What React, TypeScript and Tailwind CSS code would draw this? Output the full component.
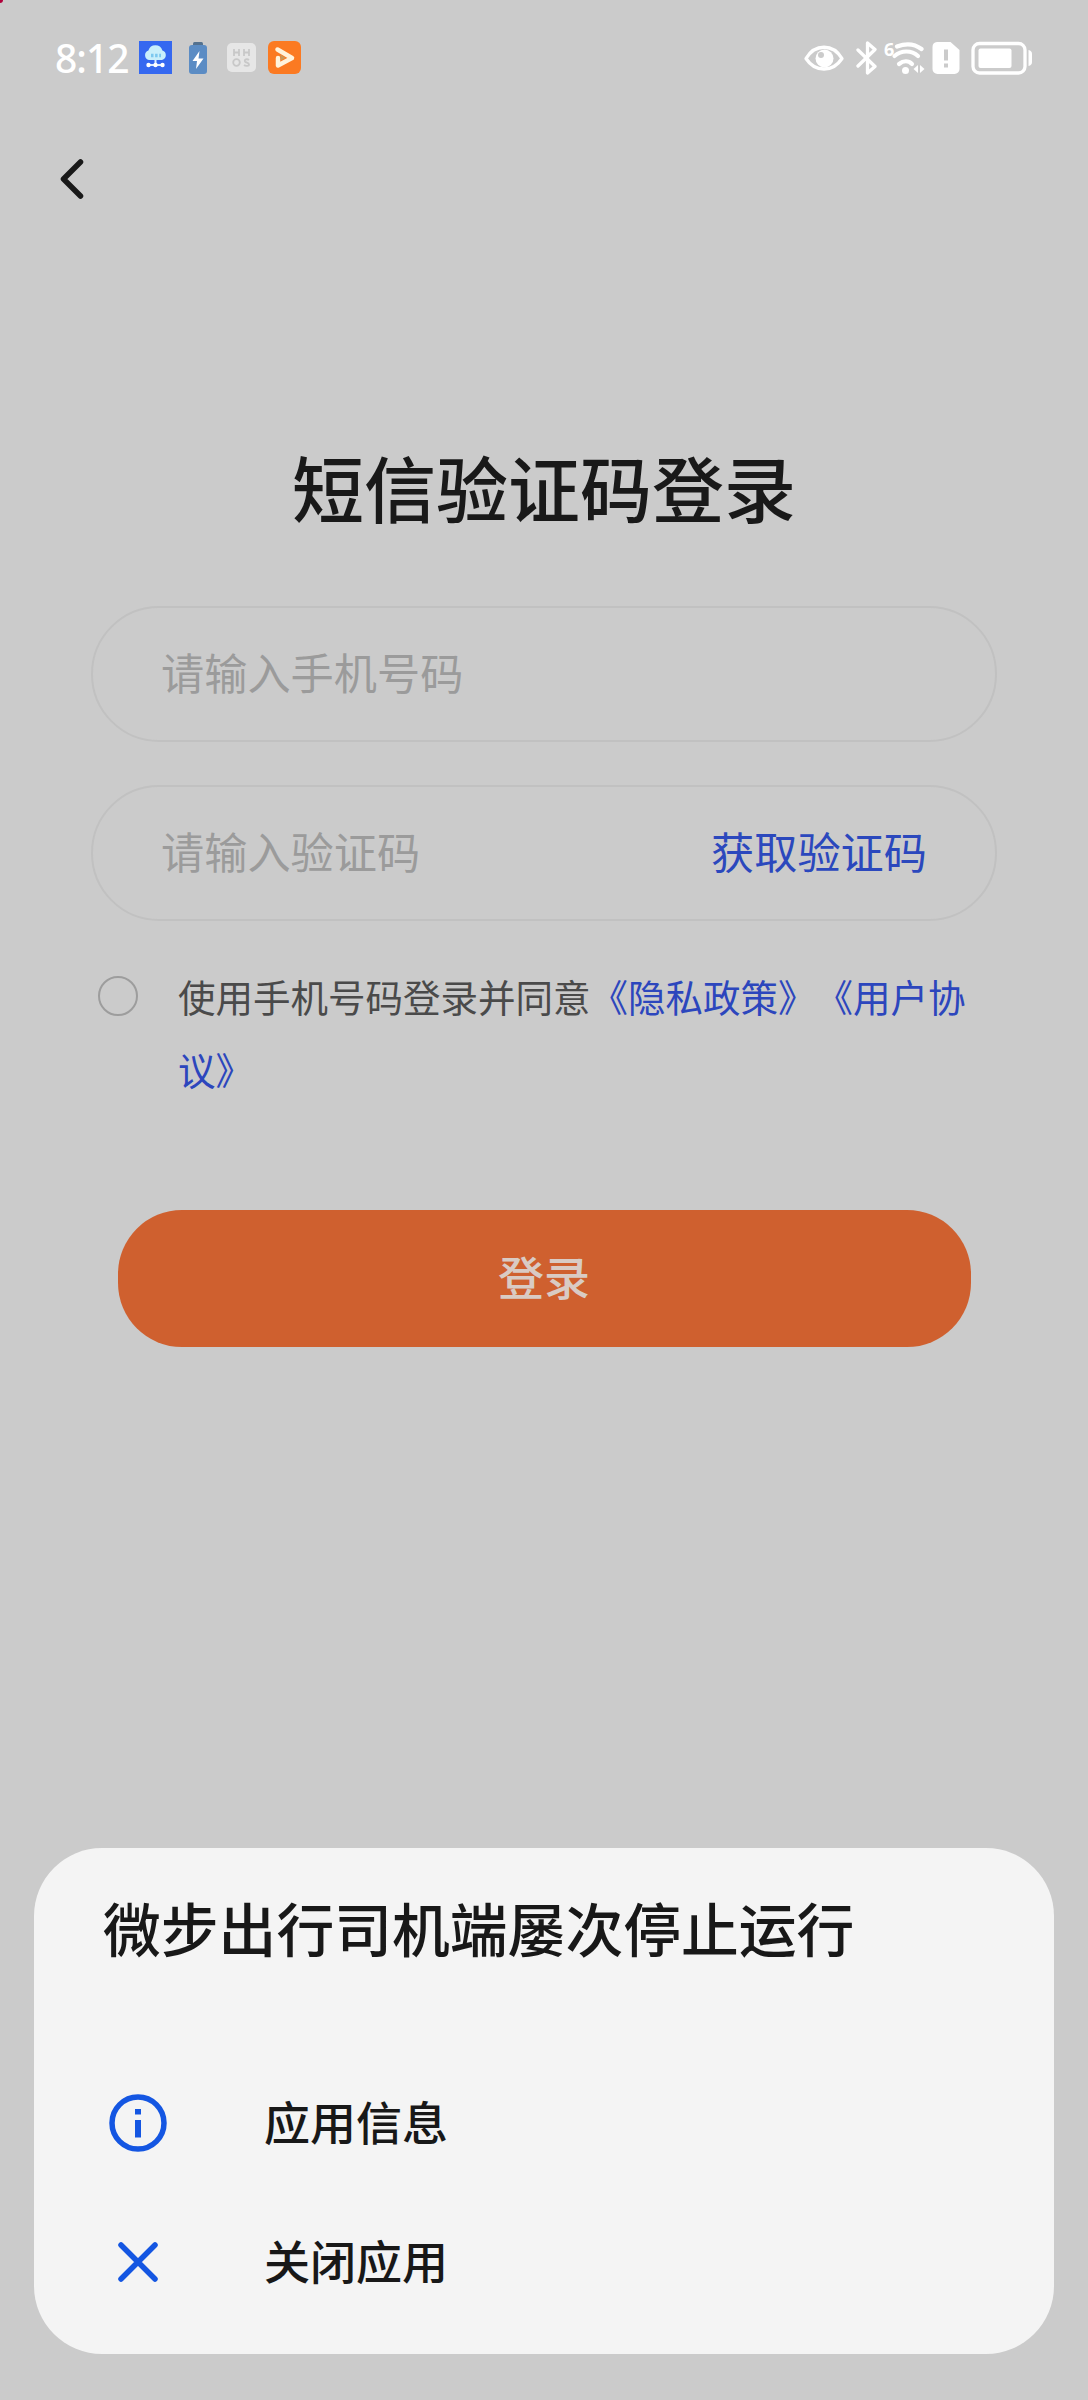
import React from 'react';

function NotificationIcons() {
  return (
    <div className="flex items-center">
      <svg className="w-[33px] h-[33px]" viewBox="0 0 33 33">
        <rect width="33" height="33" fill="#3568f0" />
        <path d="M10 19a5 5 0 0 1-.6-9.6 7.300 7.300 0 0 1 14 0A5 5 0 0 1 23 19z" fill="#c9effb" />
        <path d="M12 14.500h10" stroke="#7cc8ef" strokeWidth="3.500" strokeDasharray="2.500 1.600" />
        <path d="M16.500 19v5M8 24h17" stroke="#d9ecff" strokeWidth="2" />
        <circle cx="9.500" cy="24" r="2.200" fill="#fff" />
        <circle cx="16.500" cy="24" r="2.200" fill="#fff" />
        <circle cx="23.500" cy="24" r="2.200" fill="#fff" />
      </svg>
      <svg className="w-[18px] h-[32px] ml-[17px]" viewBox="0 0 18 32">
        <rect x="4" y="0" width="10" height="4" rx="1.500" fill="#53718f" />
        <rect x="0" y="3" width="18" height="29" rx="3" fill="#5b8cc4" />
        <path d="M10.500 9 3.500 19h4.500L7 27 14.500 16.500H9.500z" fill="#fff" />
      </svg>
      <svg className="w-[29px] h-[29px] ml-[20px]" viewBox="0 0 29 29">
        <rect width="29" height="29" rx="5" fill="#e6e6e6" />
        <g fill="none" stroke="#c8c8c8" strokeWidth="1.800">
          <path d="M7 6v7M12 6v7M7 9.500h5M17 6v7M22 6v7M17 9.500h5" />
          <circle cx="9.500" cy="19.500" r="3.300" />
          <path d="M22 17c-2-1.500-5-.5-4 1.500.8 1.500 4 1 4 3 0 1.800-3.500 1.800-5 .5" />
        </g>
      </svg>
      <svg className="w-[33px] h-[33px] ml-[12px]" viewBox="0 0 33 33">
        <rect width="33" height="33" rx="6" fill="#fb7a22" />
        <path d="M9.500 8.500L24 17 10 24.500V17" fill="none" stroke="#fff3dc" strokeWidth="4.500" strokeLinejoin="round" strokeLinecap="round" />
        <path d="M12.500 13.500v6l5-2.500z" fill="#c79a5c" />
      </svg>
    </div>
  );
}

function SystemIcons() {
  return (
    <div className="flex items-center">
      <svg className="w-[40px] h-[34px]" viewBox="0 0 40 34" fill="none">
        <path d="M2 17.500C11 2.500 29 2.500 38 17.500 29 31.500 11 31.500 2 17.500z" stroke="#fff" strokeWidth="3.300" strokeLinejoin="round" />
        <circle cx="20.500" cy="17.500" r="9" fill="#fff" />
        <circle cx="17" cy="14" r="3" fill="#cbcbcb" />
      </svg>
      <svg className="w-[22px] h-[34px] ml-[12px]" viewBox="0 0 22 34" fill="none">
        <path d="M2 9l17 16.500-7.500 6.500V2L19 8.500 2 25" stroke="#fff" strokeWidth="3.300" strokeLinejoin="round" strokeLinecap="round" />
      </svg>
      <div className="relative ml-[6px] w-[42px] h-[34px]">
        <span className="absolute left-0 top-0 font-['Noto_Sans'] text-[18px] leading-[16px] font-bold text-white">6</span>
        <svg className="w-[42px] h-[34px]" viewBox="0 0 42 34" fill="none">
          <g stroke="#fff" strokeWidth="4.200" strokeLinecap="round">
            <path d="M13 5.500c9-3.500 18-2.500 24.500 2.500" />
            <path d="M10.500 15c7-6 17-6 23.500 0" />
            <path d="M15 23c4.500-3.500 9.500-3.500 13 0" />
          </g>
          <circle cx="21.500" cy="29.500" r="3.500" fill="#fff" />
          <path d="M34 24v8l-4.500-4zM36 24v8l4.500-4z" fill="#fff" />
        </svg>
      </div>
      <svg className="w-[28px] h-[34px] ml-[6px]" viewBox="0 0 28 34">
        <path d="M5 1h13.500L27.500 9v19a5 5 0 0 1-5 5H5.500a5 5 0 0 1-5-5V6a5 5 0 0 1 4.500-5z" fill="#fff" />
        <path d="M14 8.500v11M14 22.500v4" stroke="#cbcbcb" strokeWidth="4" />
      </svg>
      <svg className="w-[62px] h-[34px] ml-[11px]" viewBox="0 0 62 34">
        <rect x="2" y="2.500" width="52" height="29.500" rx="6.500" fill="none" stroke="#fff" strokeWidth="3.300" />
        <rect x="7.500" y="7.500" width="33" height="19.500" rx="2" fill="#fff" />
        <path d="M57.500 9c2.500.5 3.500 2 3.500 4v8c0 2-1 3.500-3.500 4z" fill="#fff" />
      </svg>
    </div>
  );
}

function StatusBar() {
  return (
    <header className="flex items-center justify-between h-[115px] pl-[55px] pr-[55px]">
      <div className="flex items-center">
        <span className="w-[84px] font-['Noto_Sans'] text-[39px] leading-none font-medium tracking-[-1px] text-white">8:12</span>
        <NotificationIcons />
      </div>
      <SystemIcons />
    </header>
  );
}

function LoginForm() {
  return (
    <main className="flex flex-col items-center">
      <h1 className="text-[72px] leading-[104px] font-medium text-[#191919]">短信验证码登录</h1>
      <div className="mt-[68px] flex items-center w-[906px] h-[136px] px-[68px] pb-[6px] rounded-[68px] border-2 border-[#c1c1c1]">
        <span className="text-[43.200px] text-[#9b9b9b]">请输入手机号码</span>
      </div>
      <div className="mt-[43px] flex items-center justify-between w-[906px] h-[136px] px-[68px] pb-[6px] rounded-[68px] border-2 border-[#c1c1c1]">
        <span className="text-[43.200px] text-[#9b9b9b]">请输入验证码</span>
        <button className="text-[43.200px] text-[#2b48bd]">获取验证码</button>
      </div>
      <div className="mt-[38px] flex w-[892px]">
        <span className="mt-[17px] w-[40px] h-[40px] shrink-0 rounded-full border-2 border-[#9d9d9d]" />
        <p className="ml-[40px] w-[800px] text-[37.500px] leading-[73px] text-[#4a4a4a] [text-spacing-trim:space-all]">
          使用手机号码登录并同意<a className="text-[#2c46bd]">《隐私政策》</a><a className="text-[#2c46bd]">《用户协议》</a>
        </p>
      </div>
      <button className="mt-[105px] w-[853px] h-[137px] pb-[7px] rounded-[64px] bg-[#cf602f] text-[46px] font-medium text-[#d9cbc4]">登录</button>
    </main>
  );
}

function CrashSheet() {
  return (
    <section className="mt-auto mx-[34px] mb-[46px] h-[506px] px-[69px] rounded-[68px] bg-[#f4f4f4] text-[#181818]">
      <h2 className="pt-[37px] text-[57.800px] leading-[84px] font-medium">微步出行司机端屡次停止运行</h2>
      <ul className="mt-[84px]">
        <li className="flex items-center h-[139px]">
          <svg className="ml-[6px] w-[58px] h-[58px]" viewBox="0 0 58 58">
            <circle cx="29" cy="29" r="26" fill="none" stroke="#1456e2" strokeWidth="5.500" />
            <path d="M29 15v5.500M29 26v17.500" stroke="#1456e2" strokeWidth="6" />
          </svg>
          <span className="ml-[97px] pb-[5px] text-[46px] font-medium">应用信息</span>
        </li>
        <li className="flex items-center h-[139px]">
          <svg className="ml-[6px] w-[58px] h-[58px]" viewBox="0 0 58 58">
            <path d="M12 12l34 34M46 12L12 46" stroke="#1456e2" strokeWidth="5.500" strokeLinecap="round" />
          </svg>
          <span className="ml-[97px] pb-[5px] text-[46px] font-medium">关闭应用</span>
        </li>
      </ul>
    </section>
  );
}

export default function App() {
  return (
    <div className="relative flex flex-col w-[1088px] h-[2400px] overflow-hidden bg-[#cbcbcb] font-['Noto_Sans_CJK_SC',sans-serif]">
      <span className="absolute -left-[3px] -top-[3px] w-[6px] h-[6px] rounded-full bg-[#b0003a]" />
      <StatusBar />
      <nav className="h-[319px] pt-[43px] pl-[59px]">
        <svg className="w-[26px] h-[42px]" viewBox="0 0 26 42">
          <path d="M21.500 4L4.500 21l17 17" fill="none" stroke="#191919" strokeWidth="5.500" strokeLinecap="round" strokeLinejoin="round" />
        </svg>
      </nav>
      <LoginForm />
      <CrashSheet />
    </div>
  );
}
